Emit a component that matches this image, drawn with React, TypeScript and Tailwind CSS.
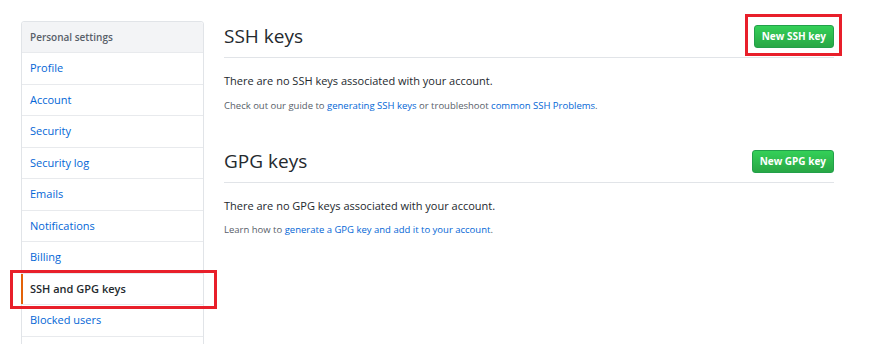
const menu = [
  "Profile",
  "Account",
  "Security",
  "Security log",
  "Emails",
  "Notifications",
  "Billing",
  "SSH and GPG keys",
  "Blocked users",
  "",
];

const font = { fontFamily: '"Open Sans", "Noto Sans", Arial, sans-serif' };

function Sidebar() {
  return (
    <nav className="w-[183px] shrink-0 border border-[#e1e4e8] rounded-[3px] bg-white">
      <div className="h-[30px] flex items-center px-[8px] bg-[#f3f4f6] text-[10px] font-semibold text-[#586069] rounded-t-[3px]">
        Personal settings
      </div>
      {menu.map((item, i) => {
        const active = item === "SSH and GPG keys";
        return (
          <div
            key={i}
            className={
              "relative h-[31.5px] flex items-center px-[8px] border-t border-[#e8eaed] text-[11px] " +
              (active ? "text-[#24292e] font-semibold" : "text-[#0366d6]")
            }
          >
            {active && (
              <span className="absolute left-[-1px] top-0 bottom-0 w-[2px] bg-[#e36209]" />
            )}
            {item}
            {active && (
              <span className="absolute left-[-12px] right-[-14px] top-[-4px] bottom-[-5px] border-[3px] border-[#e81f2a]" />
            )}
          </div>
        );
      })}
    </nav>
  );
}

function GreenButton({ label, boxed }: { label: string; boxed?: boolean }) {
  return (
    <div className="relative">
      <button className="h-[23px] px-[7px] rounded-[3px] border border-[#22a04a] bg-gradient-to-b from-[#34d058] to-[#28a745] text-white text-[10px] font-bold">
        {label}
      </button>
      {boxed && (
        <span className="absolute left-[-9px] right-[-8px] top-[-8px] bottom-[-8px] border-[3px] border-[#e81f2a]" />
      )}
    </div>
  );
}

function Section({
  title,
  button,
  boxed,
  empty,
  children,
}: {
  title: string;
  button: string;
  boxed?: boolean;
  empty: string;
  children: React.ReactNode;
}) {
  return (
    <section>
      <div className="flex items-start justify-between h-[37px] pt-[1px] border-b border-[#e1e4e8]">
        <h2 className="text-[19px] text-[#24292e] leading-none mt-[5px]">{title}</h2>
        <GreenButton label={button} boxed={boxed} />
      </div>
      <p className="mt-[15px] text-[11px] text-[#24292e]">{empty}</p>
      <p className="mt-[9px] text-[9.5px] text-[#586069]">{children}</p>
    </section>
  );
}

export default function App() {
  return (
    <div className="w-[878px] h-[344px] overflow-hidden bg-white" style={font}>
      <div className="flex gap-[20px] pl-[21px] pt-[21px]">
        <Sidebar />
        <main className="w-[610px]">
          <Section
            title="SSH keys"
            button="New SSH key"
            boxed
            empty="There are no SSH keys associated with your account."
          >
            Check out our guide to{" "}
            <a className="text-[#0366d6]">generating SSH keys</a> or troubleshoot{" "}
            <a className="text-[#0366d6]">common SSH Problems</a>.
          </Section>
          <div className="h-[33px]" />
          <Section
            title="GPG keys"
            button="New GPG key"
            empty="There are no GPG keys associated with your account."
          >
            Learn how to{" "}
            <a className="text-[#0366d6]">generate a GPG key and add it to your account</a>.
          </Section>
        </main>
      </div>
    </div>
  );
}
